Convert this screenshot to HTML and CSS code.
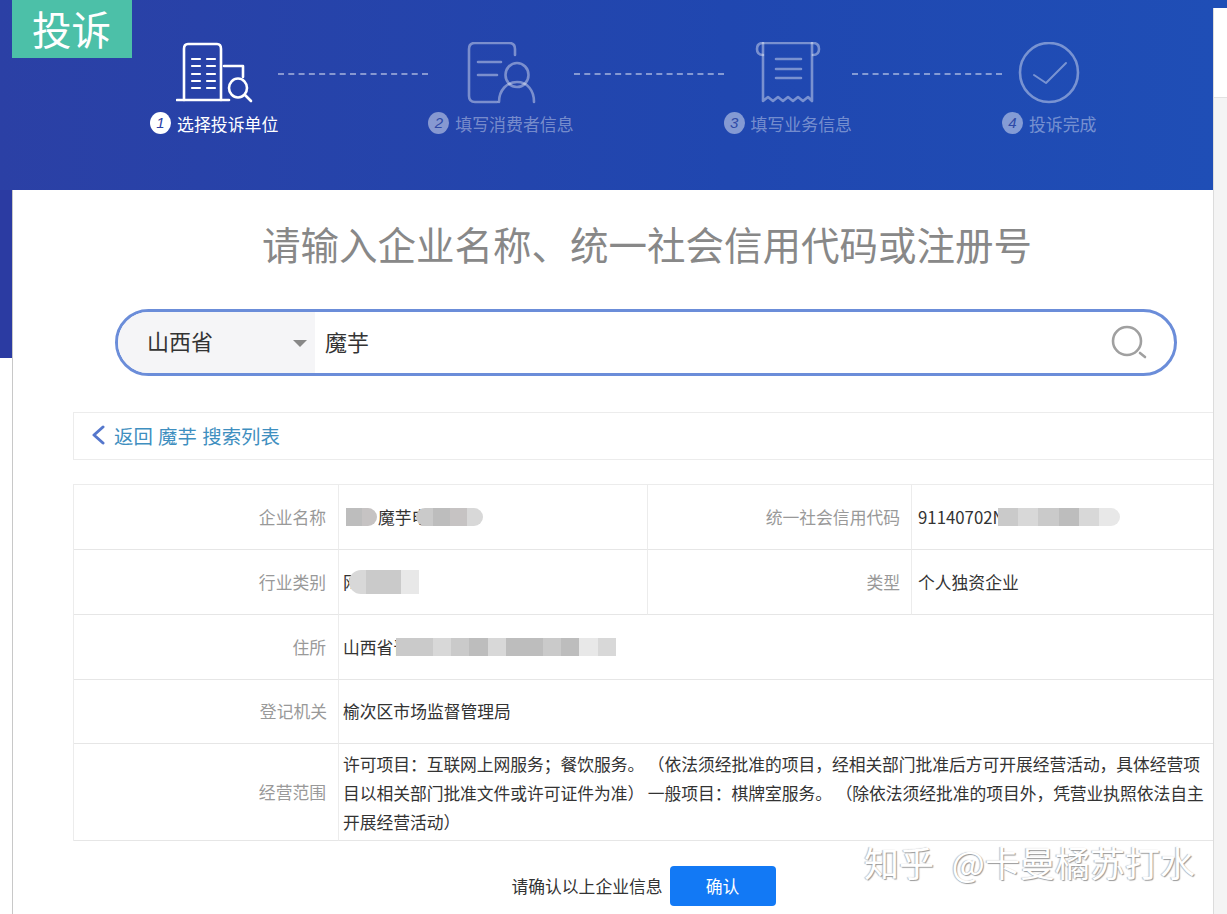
FILE: index.html
```html
<!DOCTYPE html>
<html lang="zh-CN">
<head>
<meta charset="utf-8">
<title>投诉</title>
<link rel="stylesheet" href="styles.css">
</head>
<body>
<div class="page">
  <div class="content">
    <header class="hero">
      <div class="tag">投诉</div>
      <div class="steps">
        <div class="step active">
          <svg class="icon" viewBox="176 42 77 62" width="77" height="62" fill="none" stroke="currentColor" stroke-width="2.6" stroke-linecap="round" stroke-linejoin="round">
            <path d="M184 100V49q0-5 4-5h29q4 0 4 5v51"/>
            <path d="M177 100h52"/>
            <path d="M192 59h8M207 59h8M192 66h8M207 66h8M192 74h8M207 74h8M192 81h8M207 81h8M192 88h8M207 88h8" stroke-width="2.2"/>
            <path d="M224 66h19v11"/>
            <ellipse cx="238" cy="88" rx="9" ry="9.5"/>
            <path d="M245 95l6 6"/>
          </svg>
          <div class="label"><span class="badge">1</span>选择投诉单位</div>
        </div>
        <div class="dash"></div>
        <div class="step">
          <svg class="icon" viewBox="466 42 70 62" width="70" height="62" fill="none" stroke="currentColor" stroke-width="2.6" stroke-linecap="round" stroke-linejoin="round">
            <path d="M515 55v-6q0-6-6-6h-34q-6 0-6 6v47q0 6 6 6h22"/>
            <path d="M478 62h23M478 75h19"/>
            <ellipse cx="517" cy="75" rx="11.5" ry="12"/>
            <path d="M499 102c0-12 8-20 18-20s17 8 17 20"/>
          </svg>
          <div class="label"><span class="badge">2</span>填写消费者信息</div>
        </div>
        <div class="dash"></div>
        <div class="step">
          <svg class="icon" viewBox="755 42 66 62" width="66" height="62" fill="none" stroke="currentColor" stroke-width="2.6" stroke-linecap="round" stroke-linejoin="round">
            <path d="M763 55q-6 0-6-6t6-6h50q6 0 6 6t-6 6"/>
            <path d="M763 43v58l5-4 5 4 5-4 5 4 5-4 5 4 5-4 5 4 5-4 4 4V43"/>
            <path d="M776 59h25M776 69h25M776 78h25"/>
          </svg>
          <div class="label"><span class="badge">3</span>填写业务信息</div>
        </div>
        <div class="dash"></div>
        <div class="step">
          <svg class="icon" viewBox="1018 42 62 62" width="62" height="62" fill="none" stroke="currentColor" stroke-width="2.6" stroke-linecap="round" stroke-linejoin="round">
            <ellipse cx="1049" cy="72.5" rx="29" ry="29.5"/>
            <path d="M1034 75l12 8 20-20" stroke-width="2"/>
          </svg>
          <div class="label"><span class="badge">4</span>投诉完成</div>
        </div>
      </div>
    </header>
    <div class="body">
      <div class="band"></div>
      <main class="card">
        <div class="search-wrap">
          <h1 class="title">请输入企业名称、统一社会信用代码或注册号</h1>
          <div class="search">
            <div class="province">山西省<span class="caret"></span></div>
            <div class="query">魔芋</div>
            <svg class="glass" viewBox="0 0 36 36" width="36" height="36" fill="none" stroke="#a0a0a0" stroke-width="2.6" stroke-linecap="round">
              <circle cx="16" cy="16" r="14"/>
              <path d="M29 28l5 4"/>
            </svg>
          </div>
        </div>
        <div class="back"><svg class="chev" viewBox="0 0 14 20" width="14" height="20" fill="none" stroke="#5577cc" stroke-width="3" stroke-linecap="round" stroke-linejoin="round"><path d="M12 2L3 10l9 8"/></svg><span>返回 魔芋 搜索列表</span></div>
        <div class="info">
          <div class="k">企业名称</div>
          <div class="v"><span class="mosaic m-a"><i class="g3"></i><i class="g4"></i></span>魔芋电<span class="mosaic m-b"><i class="g2"></i><i class="g3"></i><i class="g4"></i><i class="g1"></i></span></div>
          <div class="k">统一社会信用代码</div>
          <div class="v">91140702N<span class="mosaic m-c"><i class="g2"></i><i class="g1"></i><i class="g2"></i><i class="g3"></i><i class="g1"></i><i class="g5"></i></span></div>
          <div class="k">行业类别</div>
          <div class="v">网<span class="mosaic m-d"><i class="g1"></i><i class="g2"></i><i class="g2"></i><i class="g5"></i></span></div>
          <div class="k">类型</div>
          <div class="v">个人独资企业</div>
          <div class="k">住所</div>
          <div class="v wide">山西省晋<span class="mosaic m-e"><i class="g2"></i><i class="g2"></i><i class="g1"></i><i class="g2"></i><i class="g3"></i><i class="g1"></i><i class="g3"></i><i class="g3"></i><i class="g2"></i><i class="g3"></i><i class="g5"></i><i class="g1"></i></span></div>
          <div class="k">登记机关</div>
          <div class="v wide">榆次区市场监督管理局</div>
          <div class="k">经营范围</div>
          <div class="v wide tall">许可项目：互联网上网服务；餐饮服务。 （依法须经批准的项目，经相关部门批准后方可开展经营活动，具体经营项目以相关部门批准文件或许可证件为准） 一般项目：棋牌室服务。 （除依法须经批准的项目外，凭营业执照依法自主开展经营活动）</div>
        </div>
        <div class="confirm">
          <span>请确认以上企业信息</span>
          <button class="btn" type="button">确认</button>
        </div>
      </main>
    </div>
  </div>
  <aside class="rail">
    <div class="rail-top"></div>
  </aside>
  <div class="watermark">知乎 @卡曼橘苏打水</div>
</div>
</body>
</html>
```
FILE: styles.css
```css
* { box-sizing: border-box; }
html, body { margin: 0; padding: 0; background: #fff; }
body { font-family: "Noto Sans CJK SC", "Noto Sans", sans-serif; color: #333; }
.page { position: relative; display: flex; width: 1227px; height: 914px; overflow: hidden; }
.content { width: 1213px; flex: none; }
.hero { position: relative; height: 190px; padding: 43px 0 0 150px; background: linear-gradient(90deg, #2b40a5 0%, #2047b0 60%, #1f4eb6 100%); }
.tag { position: absolute; left: 12px; top: 0; width: 120px; height: 58px; background: #4cc0a8; color: #fff; font-size: 39.5px; line-height: 56px; padding-left: 20px; }
.steps { display: flex; align-items: flex-start; }
.step { display: flex; flex-direction: column; align-items: center; color: rgba(255,255,255,.4); }
.step.active { color: #fff; }
.icon { display: block; margin-top: -1px; }
.label { display: flex; align-items: center; gap: 6px; margin-top: 7px; height: 24px; font-size: 16.9px; white-space: nowrap; }
.badge { width: 21px; height: 22px; border-radius: 50%; background: rgba(255,255,255,.45); color: #2f4aa6; font-family: "Liberation Sans", sans-serif; font-size: 15px; font-style: italic; line-height: 22px; text-align: center; }
.active .badge { background: #fff; color: #2b40a5; }
.dash { width: 150px; margin-top: 30px; border-top: 2px dashed rgba(255,255,255,.45); }
.body { display: flex; }
.band { flex: none; width: 12px; height: 168px; background: #2b3ba2; }
.card { flex: 1; min-width: 0; height: 724px; background: #fff; border-left: 1px solid #c8c8c8; }
.search-wrap { width: 1062px; margin-left: 102px; padding-top: 24px; }
.title { margin: 0; height: 58px; padding-left: 2px; font-size: 38.5px; font-weight: 400; line-height: 58px; color: #888; text-align: center; white-space: nowrap; }
.search { display: flex; align-items: center; height: 67px; margin-top: 37px; border: 3px solid #6b8dd9; border-radius: 34px; overflow: hidden; }
.province { position: relative; width: 197px; height: 100%; padding-left: 29px; background: #f5f5f7; font-size: 22px; line-height: 56px; color: #333; }
.caret { position: absolute; right: 8px; top: 28px; border: 7.5px solid transparent; border-top: 7px solid #888; border-bottom: 0; }
.query { flex: 1; padding-left: 10px; font-size: 22px; line-height: 56px; padding-bottom: 4px; color: #333; }
.glass { flex: none; margin: 0 27px 0 0; }
.back { display: flex; align-items: center; height: 48px; margin: 36px 0 0 60px; padding: 0 0 2px 17px; border: 1px solid #ececec; border-right: 0; font-size: 19.4px; color: #3f8fc0; word-spacing: 1px; }
.chev { margin-right: 9px; }
.info { display: grid; grid-template-columns: 265px 309px 264px 1fr; grid-template-rows: 65px 65px 65px 64px 97px; margin: 24px 0 0 60px; border-top: 1px solid #ececec; border-left: 1px solid #ececec; }
.k, .v { display: flex; align-items: center; padding-bottom: 1px; border-bottom: 1px solid #e6e6e6; font-size: 16.8px; white-space: nowrap; }
.k { justify-content: flex-end; padding-right: 12px; color: #999; border-right: 1px solid #ececec; }
.k:nth-child(4n+3) { padding-right: 11px; }
.v { padding-left: 4px; color: #333; border-right: 1px solid #ececec; }
.v:nth-child(4n) { padding-left: 6px; border-right: 0; }
.v.wide { grid-column: span 3; padding-left: 4px; border-right: 0; }
.v.tall { display: block; padding: 6px 0 0 4px; white-space: normal; line-height: 29px; letter-spacing: -.05px; }
.mosaic { display: inline-flex; height: 18px; overflow: hidden; }
.mosaic i { display: block; flex: 1; }
.g1 { background: #d8d8d8; }
.g2 { background: #cacaca; }
.g3 { background: #bdbdbd; }
.g4 { background: #c6c3c3; }
.g5 { background: #e8e8e8; }
.m-a { width: 31px; margin: 0 1px 0 3px; border-radius: 0 9px 9px 0; }
.m-b { width: 67px; margin-left: -12px; border-radius: 9px; }
.m-c { width: 122px; margin-left: -7px; border-radius: 0 9px 9px 0; }
.m-d { width: 70px; margin-left: -11px; height: 24px; border-radius: 12px 0 0 12px; }
.m-e { width: 220px; margin-left: -14px; }
.confirm { display: flex; align-items: center; justify-content: center; gap: 7px; width: 1062px; margin: 0 0 0 102px; padding-top: 25px; padding-right: 5px; font-size: 16.8px; color: #333; }
.btn { width: 106px; height: 40px; border: 0; border-radius: 4px; background: #1279f5; color: #fff; font: inherit; }
.rail { flex: none; width: 14px; padding-top: 8px; background: #f4f4f4; border-left: 1px solid #dcdcdc; position: relative; }
.rail::before { content: ""; position: absolute; left: -1px; right: 0; top: 0; height: 8px; background: #1f4eb6; }
.rail-top { height: 90px; background: #fff; border-bottom: 1px solid #e2e2e2; }
.watermark { position: absolute; left: 864px; top: 837px; font-size: 35px; line-height: 50px; word-spacing: 10px; white-space: nowrap; color: #fff; text-shadow: 1px 1px 1px #999, -1px 0 1px #bbb; }
```
